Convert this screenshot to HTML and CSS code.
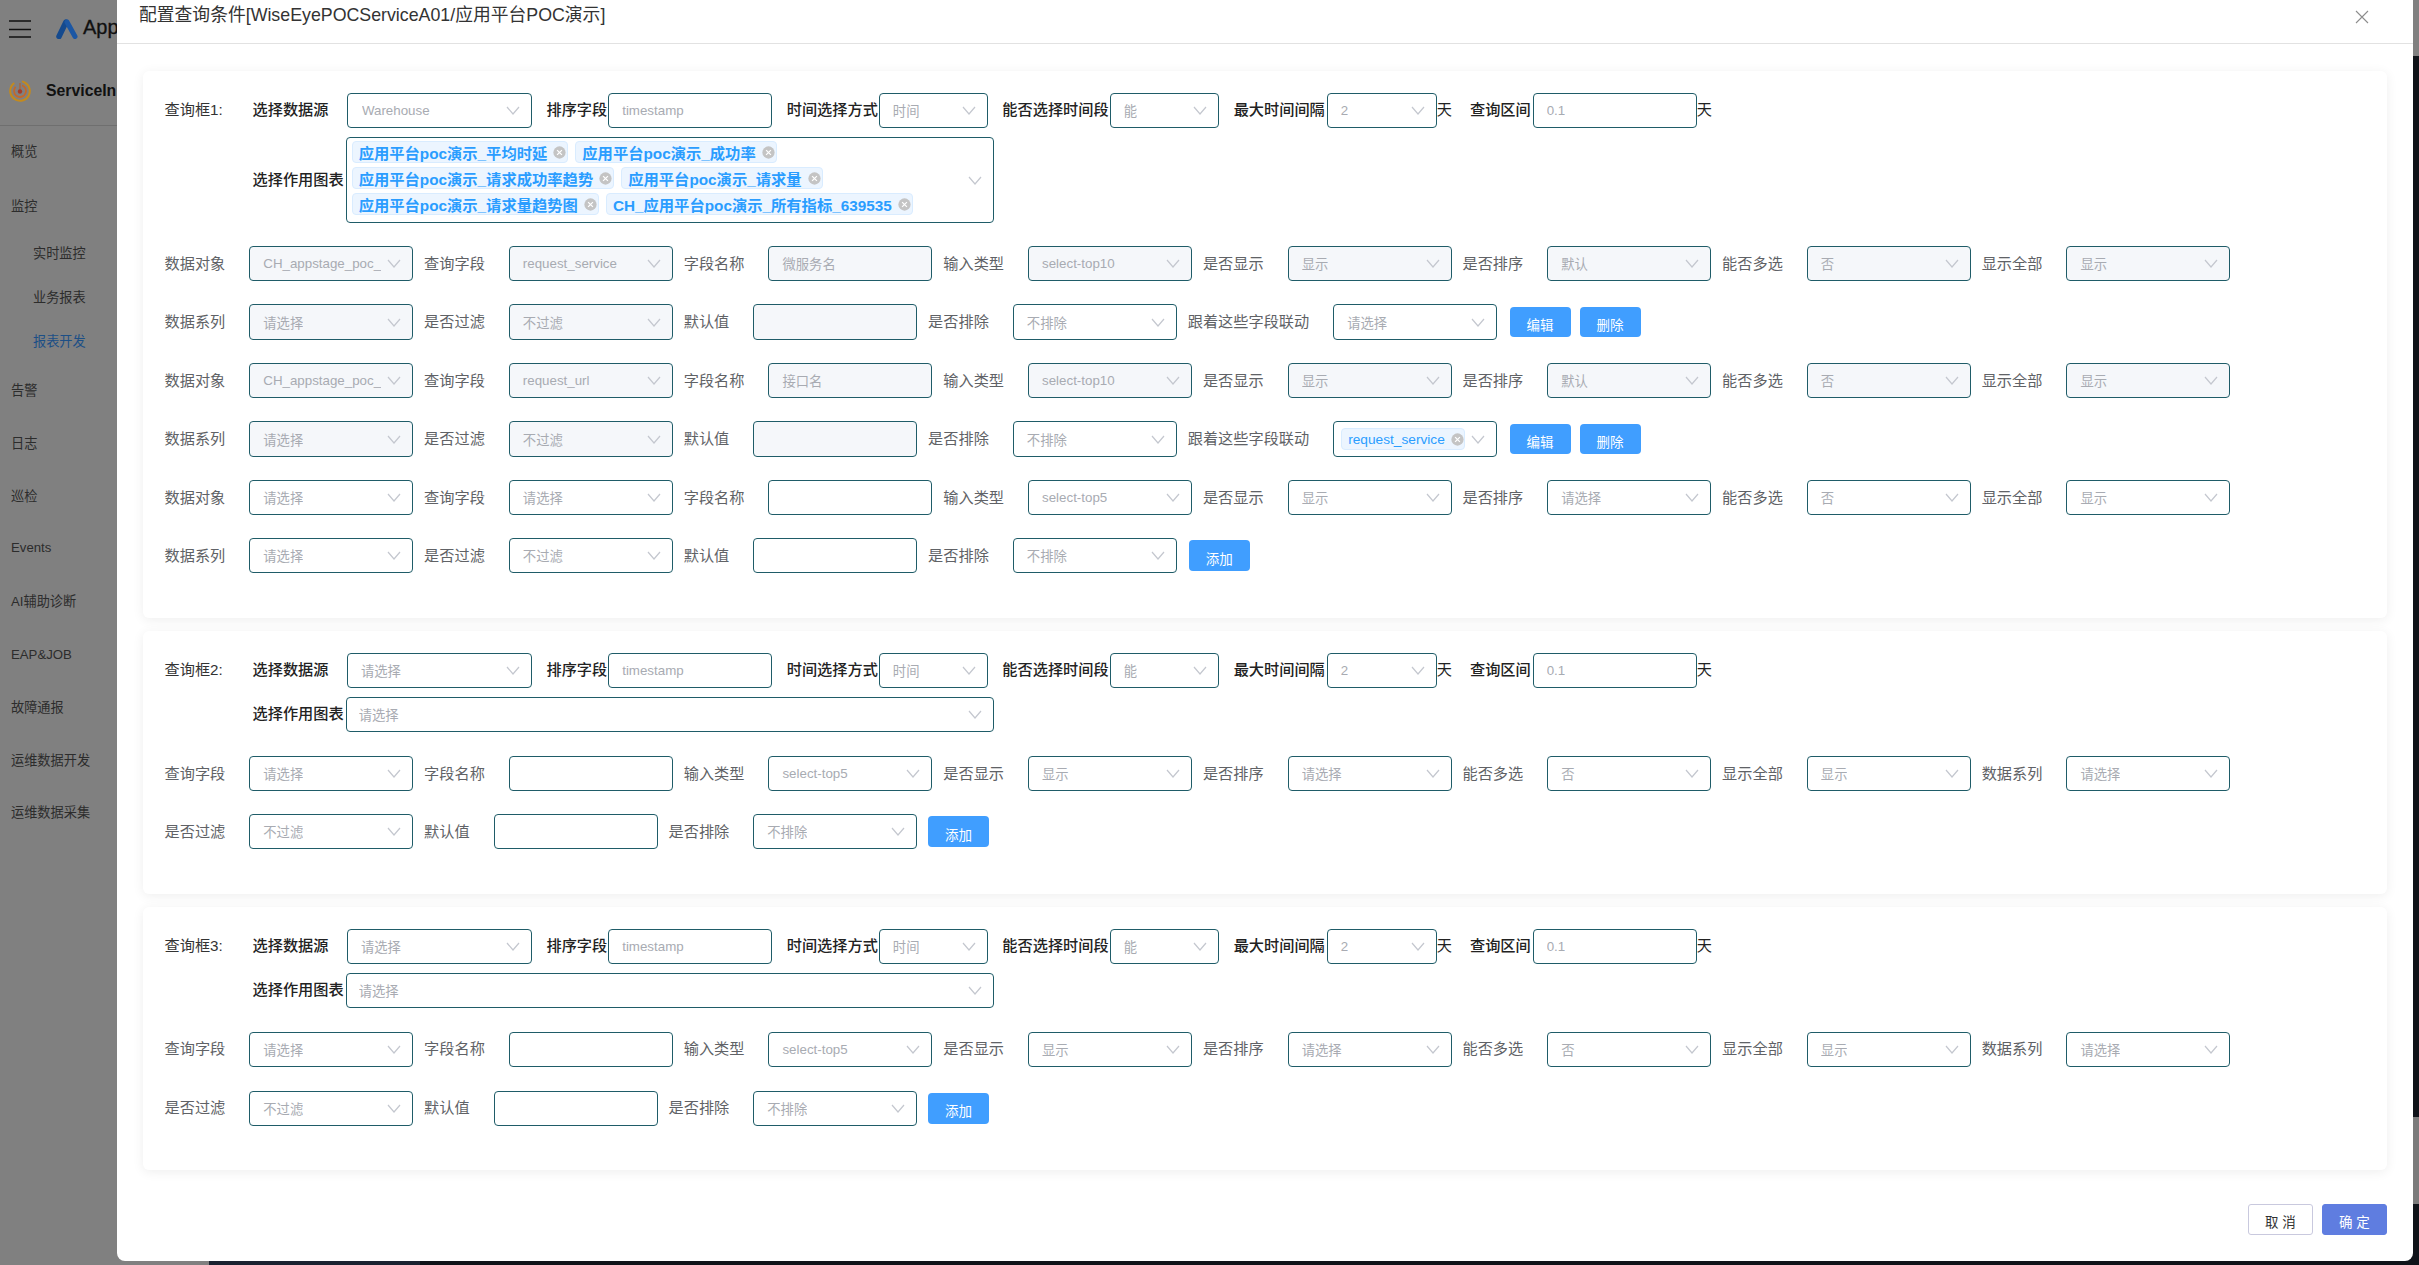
FILE: index.html
```html
<!DOCTYPE html>
<html lang="zh-CN">
<head>
<meta charset="utf-8">
<title>配置查询条件</title>
<link rel="stylesheet" href="styles.css">
</head>
<body>
<svg class="defs" aria-hidden="true"><symbol id="chev" viewBox="0 0 14 9"><polyline points="1,1 7,8 13,1" fill="none" stroke="#c4c7cf" stroke-width="1.2"/></symbol><symbol id="x" viewBox="0 0 14 14"><circle cx="7" cy="7" r="6.6" fill="#c4c4c4"/><path d="M4.4 4.4l5.2 5.2M9.6 4.4l-5.2 5.2" stroke="#fff" stroke-width="1.3" fill="none"/></symbol></svg>
<div class="shell">
  <aside class="side">
    <div class="brand">
      <svg class="burger" viewBox="0 0 22 18"><path d="M0 1h22M0 9.5h22M0 17h22" stroke="#111" stroke-width="1.6"/></svg>
      <svg class="logo" viewBox="0 0 22 20"><path d="M3 17.5L10 3" stroke="#154a8e" stroke-width="5.5" stroke-linecap="round" fill="none"/><path d="M11 3l8 14.5" stroke="#1c57a4" stroke-width="5" stroke-linecap="round" fill="none"/></svg>
      <span class="app">App</span>
    </div>
    <div class="service">
      <svg class="svc-ico" viewBox="0 0 22 22"><circle cx="11" cy="11" r="9.8" fill="none" stroke="#c48a1c" stroke-width="2" stroke-dasharray="50 8" transform="rotate(-60 11 11)"/><circle cx="11" cy="11" r="6" fill="none" stroke="#c4682a" stroke-width="1.8" stroke-dasharray="30 7" transform="rotate(-70 11 11)"/><path d="M11 3v8" stroke="#b5602c" stroke-width="1.2"/><circle cx="11" cy="11.5" r="2.2" fill="#a83c28"/></svg>
      <span class="svc-name">ServiceIn</span>
    </div>
    <nav class="menu">
      <a class="m i1">概览</a>
      <a class="m i2">监控</a>
      <a class="m sub i3">实时监控</a>
      <a class="m sub i4">业务报表</a>
      <a class="m sub on i5">报表开发</a>
      <a class="m i6">告警</a>
      <a class="m i7">日志</a>
      <a class="m i8">巡检</a>
      <a class="m i9">Events</a>
      <a class="m i10">AI辅助诊断</a>
      <a class="m i11">EAP&amp;JOB</a>
      <a class="m i12">故障通报</a>
      <a class="m i13">运维数据开发</a>
      <a class="m i14">运维数据采集</a>
    </nav>
  </aside>
  <div class="back-a"></div>
  <div class="back-b"></div>
</div>
<div class="strip-top"></div>
<div class="strip-low"></div>

<section class="modal">
  <header class="head">
    <h1 class="title">配置查询条件[WiseEyePOCServiceA01/应用平台POC演示]</h1>
    <svg class="close" viewBox="0 0 14 14"><path d="M1 1l12 12M13 1L1 13" stroke="#8d8d8d" stroke-width="1.1" fill="none"/></svg>
  </header>
  <div class="body">

    <!-- 查询框1 -->
    <div class="card">
      <div class="row">
        <span class="qname">查询框1:</span>
        <span class="blab first">选择数据源</span>
        <div class="ctl w185 wide"><span class="ph">Warehouse</span><svg class="chev"><use href="#chev"/></svg></div>
        <span class="blab">排序字段</span>
        <div class="ctl w164"><span class="ph">timestamp</span></div>
        <span class="blab">时间选择方式</span>
        <div class="ctl w109"><span class="ph">时间</span><svg class="chev"><use href="#chev"/></svg></div>
        <span class="blab">能否选择时间段</span>
        <div class="ctl w109"><span class="ph">能</span><svg class="chev"><use href="#chev"/></svg></div>
        <span class="blab g2">最大时间间隔</span>
        <div class="ctl w110"><span class="ph">2</span><svg class="chev"><use href="#chev"/></svg></div>
        <span class="day">天</span>
        <span class="blab g2 after-day">查询区间</span>
        <div class="ctl w164"><span class="ph">0.1</span></div>
        <span class="day">天</span>
      </div>
      <div class="row r-chart">
        <span class="blab chart">选择作用图表</span>
        <div class="multi big">
          <div class="tags">
            <span class="tag">应用平台poc演示_平均时延<svg class="tx"><use href="#x"/></svg></span>
            <span class="tag">应用平台poc演示_成功率<svg class="tx"><use href="#x"/></svg></span>
            <span class="tag">应用平台poc演示_请求成功率趋势<svg class="tx"><use href="#x"/></svg></span>
            <span class="tag">应用平台poc演示_请求量<svg class="tx"><use href="#x"/></svg></span>
            <span class="tag">应用平台poc演示_请求量趋势图<svg class="tx"><use href="#x"/></svg></span>
            <span class="tag">CH_应用平台poc演示_所有指标_639535<svg class="tx"><use href="#x"/></svg></span>
          </div>
          <svg class="chev"><use href="#chev"/></svg>
        </div>
      </div>

      <div class="row gap">
        <span class="lab">数据对象</span><div class="ctl off"><span class="ph">CH_appstage_poc_</span><svg class="chev"><use href="#chev"/></svg></div>
        <span class="lab">查询字段</span><div class="ctl off"><span class="ph">request_service</span><svg class="chev"><use href="#chev"/></svg></div>
        <span class="lab">字段名称</span><div class="ctl off"><span class="ph">微服务名</span></div>
        <span class="lab">输入类型</span><div class="ctl off"><span class="ph">select-top10</span><svg class="chev"><use href="#chev"/></svg></div>
        <span class="lab">是否显示</span><div class="ctl off"><span class="ph">显示</span><svg class="chev"><use href="#chev"/></svg></div>
        <span class="lab">是否排序</span><div class="ctl off"><span class="ph">默认</span><svg class="chev"><use href="#chev"/></svg></div>
        <span class="lab">能否多选</span><div class="ctl off"><span class="ph">否</span><svg class="chev"><use href="#chev"/></svg></div>
        <span class="lab">显示全部</span><div class="ctl off"><span class="ph">显示</span><svg class="chev"><use href="#chev"/></svg></div>
      </div>
      <div class="row gap">
        <span class="lab">数据系列</span><div class="ctl off tall"><span class="ph">请选择</span><svg class="chev"><use href="#chev"/></svg></div>
        <span class="lab">是否过滤</span><div class="ctl off tall"><span class="ph">不过滤</span><svg class="chev"><use href="#chev"/></svg></div>
        <span class="lab">默认值</span><div class="ctl off tall"></div>
        <span class="lab">是否排除</span><div class="ctl tall"><span class="ph">不排除</span><svg class="chev"><use href="#chev"/></svg></div>
        <span class="lab">跟着这些字段联动</span><div class="ctl tall"><span class="ph">请选择</span><svg class="chev"><use href="#chev"/></svg></div>
        <button class="btn shift">编辑</button><button class="btn next">删除</button>
      </div>
      <div class="row gap">
        <span class="lab">数据对象</span><div class="ctl off"><span class="ph">CH_appstage_poc_</span><svg class="chev"><use href="#chev"/></svg></div>
        <span class="lab">查询字段</span><div class="ctl off"><span class="ph">request_url</span><svg class="chev"><use href="#chev"/></svg></div>
        <span class="lab">字段名称</span><div class="ctl off"><span class="ph">接口名</span></div>
        <span class="lab">输入类型</span><div class="ctl off"><span class="ph">select-top10</span><svg class="chev"><use href="#chev"/></svg></div>
        <span class="lab">是否显示</span><div class="ctl off"><span class="ph">显示</span><svg class="chev"><use href="#chev"/></svg></div>
        <span class="lab">是否排序</span><div class="ctl off"><span class="ph">默认</span><svg class="chev"><use href="#chev"/></svg></div>
        <span class="lab">能否多选</span><div class="ctl off"><span class="ph">否</span><svg class="chev"><use href="#chev"/></svg></div>
        <span class="lab">显示全部</span><div class="ctl off"><span class="ph">显示</span><svg class="chev"><use href="#chev"/></svg></div>
      </div>
      <div class="row gap">
        <span class="lab">数据系列</span><div class="ctl off tall"><span class="ph">请选择</span><svg class="chev"><use href="#chev"/></svg></div>
        <span class="lab">是否过滤</span><div class="ctl off tall"><span class="ph">不过滤</span><svg class="chev"><use href="#chev"/></svg></div>
        <span class="lab">默认值</span><div class="ctl off tall"></div>
        <span class="lab">是否排除</span><div class="ctl tall"><span class="ph">不排除</span><svg class="chev"><use href="#chev"/></svg></div>
        <span class="lab">跟着这些字段联动</span><div class="ctl tall linked"><span class="tag small">request_service<svg class="tx"><use href="#x"/></svg></span><svg class="chev"><use href="#chev"/></svg></div>
        <button class="btn shift">编辑</button><button class="btn next">删除</button>
      </div>
      <div class="row gap">
        <span class="lab">数据对象</span><div class="ctl"><span class="ph">请选择</span><svg class="chev"><use href="#chev"/></svg></div>
        <span class="lab">查询字段</span><div class="ctl"><span class="ph">请选择</span><svg class="chev"><use href="#chev"/></svg></div>
        <span class="lab">字段名称</span><div class="ctl"></div>
        <span class="lab">输入类型</span><div class="ctl"><span class="ph">select-top5</span><svg class="chev"><use href="#chev"/></svg></div>
        <span class="lab">是否显示</span><div class="ctl"><span class="ph">显示</span><svg class="chev"><use href="#chev"/></svg></div>
        <span class="lab">是否排序</span><div class="ctl"><span class="ph">请选择</span><svg class="chev"><use href="#chev"/></svg></div>
        <span class="lab">能否多选</span><div class="ctl"><span class="ph">否</span><svg class="chev"><use href="#chev"/></svg></div>
        <span class="lab">显示全部</span><div class="ctl"><span class="ph">显示</span><svg class="chev"><use href="#chev"/></svg></div>
      </div>
      <div class="row gap">
        <span class="lab">数据系列</span><div class="ctl"><span class="ph">请选择</span><svg class="chev"><use href="#chev"/></svg></div>
        <span class="lab">是否过滤</span><div class="ctl"><span class="ph">不过滤</span><svg class="chev"><use href="#chev"/></svg></div>
        <span class="lab">默认值</span><div class="ctl"></div>
        <span class="lab">是否排除</span><div class="ctl"><span class="ph">不排除</span><svg class="chev"><use href="#chev"/></svg></div>
        <button class="btn add nudge">添加</button>
      </div>
    </div>

    <!-- 查询框2 -->
    <div class="card">
      <div class="row">
        <span class="qname">查询框2:</span>
        <span class="blab first">选择数据源</span>
        <div class="ctl w185"><span class="ph">请选择</span><svg class="chev"><use href="#chev"/></svg></div>
        <span class="blab">排序字段</span>
        <div class="ctl w164"><span class="ph">timestamp</span></div>
        <span class="blab">时间选择方式</span>
        <div class="ctl w109"><span class="ph">时间</span><svg class="chev"><use href="#chev"/></svg></div>
        <span class="blab">能否选择时间段</span>
        <div class="ctl w109"><span class="ph">能</span><svg class="chev"><use href="#chev"/></svg></div>
        <span class="blab g2">最大时间间隔</span>
        <div class="ctl w110"><span class="ph">2</span><svg class="chev"><use href="#chev"/></svg></div>
        <span class="day">天</span>
        <span class="blab g2 after-day">查询区间</span>
        <div class="ctl w164"><span class="ph">0.1</span></div>
        <span class="day">天</span>
      </div>
      <div class="row r-chart">
        <span class="blab chart">选择作用图表</span>
        <div class="multi"><span class="ph">请选择</span><svg class="chev"><use href="#chev"/></svg></div>
      </div>
      <div class="row gap-24">
        <span class="lab">查询字段</span><div class="ctl"><span class="ph">请选择</span><svg class="chev"><use href="#chev"/></svg></div>
        <span class="lab">字段名称</span><div class="ctl"></div>
        <span class="lab">输入类型</span><div class="ctl"><span class="ph">select-top5</span><svg class="chev"><use href="#chev"/></svg></div>
        <span class="lab">是否显示</span><div class="ctl"><span class="ph">显示</span><svg class="chev"><use href="#chev"/></svg></div>
        <span class="lab">是否排序</span><div class="ctl"><span class="ph">请选择</span><svg class="chev"><use href="#chev"/></svg></div>
        <span class="lab">能否多选</span><div class="ctl"><span class="ph">否</span><svg class="chev"><use href="#chev"/></svg></div>
        <span class="lab">显示全部</span><div class="ctl"><span class="ph">显示</span><svg class="chev"><use href="#chev"/></svg></div>
        <span class="lab">数据系列</span><div class="ctl"><span class="ph">请选择</span><svg class="chev"><use href="#chev"/></svg></div>
      </div>
      <div class="row gap">
        <span class="lab">是否过滤</span><div class="ctl"><span class="ph">不过滤</span><svg class="chev"><use href="#chev"/></svg></div>
        <span class="lab">默认值</span><div class="ctl"></div>
        <span class="lab">是否排除</span><div class="ctl"><span class="ph">不排除</span><svg class="chev"><use href="#chev"/></svg></div>
        <button class="btn add">添加</button>
      </div>
    </div>

    <!-- 查询框3 -->
    <div class="card">
      <div class="row">
        <span class="qname">查询框3:</span>
        <span class="blab first">选择数据源</span>
        <div class="ctl w185"><span class="ph">请选择</span><svg class="chev"><use href="#chev"/></svg></div>
        <span class="blab">排序字段</span>
        <div class="ctl w164"><span class="ph">timestamp</span></div>
        <span class="blab">时间选择方式</span>
        <div class="ctl w109"><span class="ph">时间</span><svg class="chev"><use href="#chev"/></svg></div>
        <span class="blab">能否选择时间段</span>
        <div class="ctl w109"><span class="ph">能</span><svg class="chev"><use href="#chev"/></svg></div>
        <span class="blab g2">最大时间间隔</span>
        <div class="ctl w110"><span class="ph">2</span><svg class="chev"><use href="#chev"/></svg></div>
        <span class="day">天</span>
        <span class="blab g2 after-day">查询区间</span>
        <div class="ctl w164"><span class="ph">0.1</span></div>
        <span class="day">天</span>
      </div>
      <div class="row r-chart">
        <span class="blab chart">选择作用图表</span>
        <div class="multi"><span class="ph">请选择</span><svg class="chev"><use href="#chev"/></svg></div>
      </div>
      <div class="row gap-235">
        <span class="lab">查询字段</span><div class="ctl"><span class="ph">请选择</span><svg class="chev"><use href="#chev"/></svg></div>
        <span class="lab">字段名称</span><div class="ctl"></div>
        <span class="lab">输入类型</span><div class="ctl"><span class="ph">select-top5</span><svg class="chev"><use href="#chev"/></svg></div>
        <span class="lab">是否显示</span><div class="ctl"><span class="ph">显示</span><svg class="chev"><use href="#chev"/></svg></div>
        <span class="lab">是否排序</span><div class="ctl"><span class="ph">请选择</span><svg class="chev"><use href="#chev"/></svg></div>
        <span class="lab">能否多选</span><div class="ctl"><span class="ph">否</span><svg class="chev"><use href="#chev"/></svg></div>
        <span class="lab">显示全部</span><div class="ctl"><span class="ph">显示</span><svg class="chev"><use href="#chev"/></svg></div>
        <span class="lab">数据系列</span><div class="ctl"><span class="ph">请选择</span><svg class="chev"><use href="#chev"/></svg></div>
      </div>
      <div class="row gap-24">
        <span class="lab">是否过滤</span><div class="ctl"><span class="ph">不过滤</span><svg class="chev"><use href="#chev"/></svg></div>
        <span class="lab">默认值</span><div class="ctl"></div>
        <span class="lab">是否排除</span><div class="ctl"><span class="ph">不排除</span><svg class="chev"><use href="#chev"/></svg></div>
        <button class="btn add">添加</button>
      </div>
    </div>

    <footer class="foot">
      <button class="fbtn cancel">取 消</button>
      <button class="fbtn ok">确 定</button>
    </footer>
  </div>
</section>
</body>
</html>
```

FILE: styles.css
```css
* { box-sizing: border-box; }
html, body { margin: 0; padding: 0; height: 100%; }
body {
  width: 2419px;
  height: 1265px;
  overflow: hidden;
  position: relative;
  background: #0d1117;
  font-family: "Liberation Sans", "Noto Sans CJK SC", sans-serif;
}
.defs { position: absolute; width: 0; height: 0; }

/* dimmed application behind the dialog */
.shell { display: flex; height: 1265px; }
.side { width: 209px; height: 1265px; background: #808080; overflow: hidden; flex: none; }
.back-a { width: 211px; background: #1a2230; margin-top: 1261px; }
.back-b { flex: 1; background: #0f1319; }
.brand { display: flex; align-items: center; height: 57px; padding-left: 9px; }
.burger { width: 22px; height: 18px; display: block; }
.logo { width: 22px; height: 20px; margin-left: 25px; }
.app { font-size: 20px; margin-left: 5px; padding-bottom: 3px; color: #111; -webkit-text-stroke: .3px #111; }
.service { display: flex; align-items: center; height: 69px; padding: 0 0 0 9px; border-bottom: 1px solid #6f6f6f; }
.svc-ico { width: 22px; height: 22px; flex: none; }
.svc-name { font-size: 15.800px; font-weight: 700; color: #111; margin-left: 15px; }
.menu { display: flex; flex-direction: column; padding-left: 11px; }
.m { display: block; font-size: 13.200px; color: #2c2c2c; line-height: 20px; height: 20px; }
.sub { padding-left: 22px; }
.on { color: #1c4f86; }
.i1 { margin-top: 16px; }
.i2 { margin-top: 35px; }
.i3 { margin-top: 27px; }
.i4 { margin-top: 24px; }
.i5 { margin-top: 24px; }
.i6 { margin-top: 29px; }
.i7 { margin-top: 33px; }
.i8 { margin-top: 33px; }
.i9 { margin-top: 31px; }
.i10 { margin-top: 34px; }
.i11 { margin-top: 33px; }
.i12 { margin-top: 33px; }
.i13 { margin-top: 33px; }
.i14 { margin-top: 32px; }

.strip-top { position: absolute; left: 2413px; top: 0; width: 6px; height: 56px; background: #808080; }
.strip-low { position: absolute; left: 2413px; top: 1117px; width: 6px; height: 87px; background: #7b7b7b; }

/* dialog */
.modal {
  position: absolute;
  left: 117px;
  top: 0;
  width: 2296px;
  height: 1261px;
  background: #fff;
  border-radius: 0 0 8px 8px;
  overflow: hidden;
}
.head { display: flex; justify-content: space-between; height: 44px; padding: 0 44px 0 22px; border-bottom: 1px solid #e2e2e2; }
.title { margin: 0; font-size: 17.800px; font-weight: 400; line-height: 30px; color: #333; }
.close { width: 14px; height: 14px; margin-top: 10px; }
.body { padding: 27px 26px 0; }

.card {
  background: #fff;
  border-radius: 6px;
  box-shadow: 0 2px 12px rgba(0, 0, 0, .07);
  padding: 22px 10px 44.500px 21.500px;
  margin-bottom: 13.500px;
}
.row { display: flex; align-items: center; white-space: nowrap; }
.gap { margin-top: 23px; }
.gap-24 { margin-top: 24px; }
.gap-235 { margin-top: 23.500px; }
.r-chart { margin-top: 9px; padding-left: 88px; }

.qname { width: 88px; flex: none; font-size: 15.200px; color: #333; padding-bottom: 5px; }
.blab { font-size: 15.200px; font-weight: 500; color: #222; margin: 0 1px 0 14.500px; padding-bottom: 5px; flex: none; }
.blab.first { margin: 0 18.500px 0 0; }
.blab.g2 { margin: 0 2px 0 15px; }
.blab.after-day { margin-left: 18px; }
.blab.chart { margin: 0 2px 0 0; }
.day { font-size: 15.200px; color: #222; flex: none; padding-bottom: 5px; }

.lab { font-size: 15.200px; color: #606266; margin-right: 24px; padding-bottom: 3.500px; flex: none; }

.ctl {
  display: flex;
  align-items: center;
  justify-content: space-between;
  width: 164px;
  height: 35px;
  flex: none;
  margin-right: 10.850px;
  padding: 0 11px 0 13px;
  border: 1px solid #1f5c68;
  border-radius: 4px;
  background: #fff;
}
.off { background: #f5f7fa; }
.tall { height: 36px; }
.w185 { width: 185px; margin-right: 0; }
.w164 { width: 164px; margin-right: 0; }
.w109 { width: 109px; margin-right: 0; }
.w110 { width: 110px; margin-right: 0; }
.wide { padding-left: 14px; }
.ph { font-size: 13.330px; color: #a8abb2; overflow: hidden; }
.chev { width: 14px; height: 9px; flex: none; display: block; margin-left: auto; }

.multi {
  display: flex;
  align-items: center;
  justify-content: space-between;
  width: 648px;
  height: 35px;
  padding: 0 11px 0 12px;
  border: 1px solid #1f5c68;
  border-radius: 4px;
  background: #fff;
}
.multi.big { height: 86px; padding: 0 11px 0 5px; }
.tags { display: flex; flex-wrap: wrap; width: 590px; row-gap: 4.500px; column-gap: 7px; padding-bottom: 4px; }
.tag {
  display: inline-flex;
  align-items: center;
  height: 21.500px;
  padding: 0 1px 0 6px;
  font-size: 15.300px;
  font-weight: 700;
  color: #2a9dff;
  background: #ecf5ff;
  border: 1px solid #d9ecff;
  border-radius: 4px;
}
.tx { width: 13px; height: 13px; margin-left: 6px; flex: none; }
.tag.small { font-size: 13.700px; font-weight: 400; height: 22px; padding: 0 0 0 6px; }
.linked { padding-left: 7px; }

.btn {
  width: 61px;
  height: 30px;
  flex: none;
  padding: 4px 0 0;
  border: 0;
  border-radius: 4px;
  background: #409eff;
  color: #fff;
  font: 13.500px "Liberation Sans", "Noto Sans CJK SC", sans-serif;
}
.btn.shift { margin-left: 1.500px; }
.btn.next { margin-left: 9px; }
.btn.add { height: 31px; }
.btn.nudge { margin-left: 1px; }

.foot { display: flex; justify-content: flex-end; gap: 9px; margin-top: 34px; }
.fbtn { width: 65px; height: 31px; padding: 3px 0 0; border-radius: 3px; font: 13.500px "Liberation Sans", "Noto Sans CJK SC", sans-serif; }
.cancel { background: #fff; border: 1px solid #c9c9de; color: #333; }
.ok { background: #5f7de0; border: 1px solid #5f7de0; color: #fff; }
```
